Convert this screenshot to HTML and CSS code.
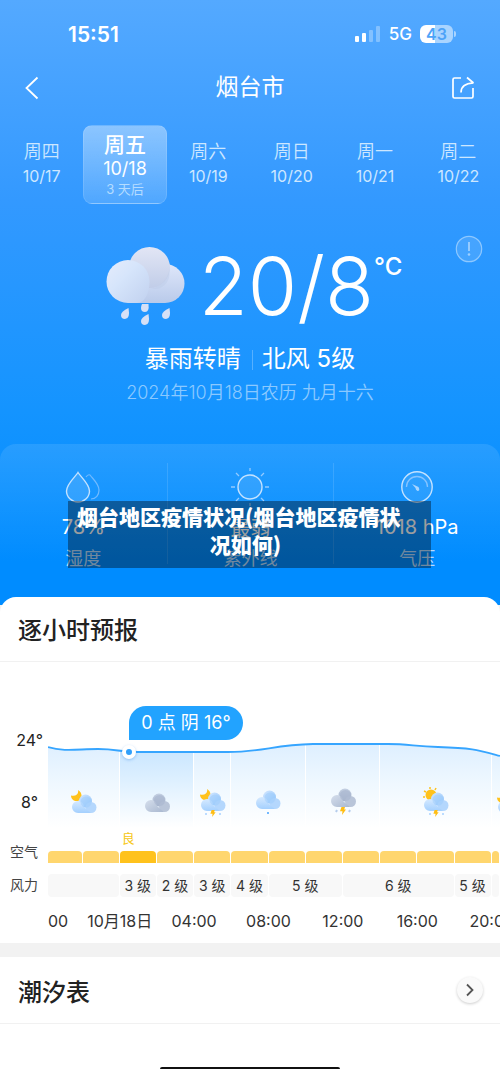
FILE: index.html
```html
<!DOCTYPE html>
<html lang="zh-CN">
<head>
<meta charset="utf-8">
<meta name="viewport" content="width=device-width, initial-scale=1">
<title>烟台市</title>
<link rel="stylesheet" href="styles.css">
</head>
<body>
<svg class="defs" aria-hidden="true">
  <defs>
    <linearGradient id="blueA" x1="0" y1="0" x2="0" y2="1"><stop offset="0" stop-color="#d5e9ff"/><stop offset="1" stop-color="#a4d0fe"/></linearGradient>
    <linearGradient id="blueB" x1="0" y1="0" x2="1" y2="1"><stop offset="0" stop-color="#d3e7ff"/><stop offset="1" stop-color="#8fc4fb"/></linearGradient>
    <linearGradient id="grayA" x1="0" y1="0" x2="1" y2="1"><stop offset="0" stop-color="#d5deec"/><stop offset="1" stop-color="#a9b8d0"/></linearGradient>
    <linearGradient id="grayB" x1="0" y1="0" x2="0" y2="1"><stop offset="0" stop-color="#c3cfe2"/><stop offset="1" stop-color="#a7b5cd"/></linearGradient>
    <symbol id="cloud-blue" viewBox="0 0 26 20">
      <circle cx="14.500" cy="7" r="6.500" fill="url(#blueB)"/>
      <circle cx="20" cy="13.500" r="5.500" fill="#b4d7fd"/>
      <path d="M7 19a6 6 0 1 1 6-6l7 6z" fill="url(#blueA)"/>
      <circle cx="15" cy="8" r="5.500" fill="#9ccbfc" opacity=".5"/>
    </symbol>
    <symbol id="cloud-gray" viewBox="0 0 26 20">
      <circle cx="15" cy="7" r="6.500" fill="url(#grayB)"/>
      <circle cx="20.500" cy="13.500" r="5.500" fill="#b9c5d9"/>
      <path d="M7 19a6 6 0 1 1 6-6l7 6z" fill="url(#grayA)"/>
      <circle cx="15.500" cy="7.500" r="5.500" fill="#a9b6cf" opacity=".6"/>
    </symbol>
    <symbol id="moon" viewBox="0 0 12 12"><path d="M7 0c1 4-2 6.500-7 5.500C0 9 3 11.500 6.500 11 11 10.500 12.500 3 7 0z" fill="#ffc21c"/></symbol>
    <symbol id="bolt" viewBox="0 0 6 8"><path d="M1.500 0H5L4.200 2.500H6L2 8l.5-3.700H0z" fill="#ffbd12"/></symbol>
  </defs>
</svg>

<main class="app">
  <section class="sky">
    <div class="status">
      <span class="clock">15:51</span>
      <div class="signals">
        <svg class="bars" viewBox="0 0 26 17" aria-hidden="true"><rect x="0" y="10" width="4" height="6" rx="1" fill="#fff"/><rect x="7" y="7" width="4" height="9" rx="1" fill="#fff"/><rect x="14" y="4" width="4" height="12" rx="1" fill="#fff" opacity=".3"/><rect x="21" y="0" width="4" height="16" rx="1" fill="#fff" opacity=".3"/></svg>
        <span class="network">5G</span>
        <span class="battery">43</span>
      </div>
    </div>

    <header class="nav">
      <button class="icon-button" aria-label="返回"><svg width="14" height="24" viewBox="0 0 14 24"><path d="M12.500 1.500L1.500 12l11 10.500" fill="none" stroke="#fff" stroke-width="1.800"/></svg></button>
      <h1 class="city">烟台市</h1>
      <button class="icon-button" aria-label="分享"><svg width="24" height="24" viewBox="0 0 24 24"><path d="M10 2H3.500Q2 2 2 3.500v17Q2 22 3.500 22h17q1.500 0 1.500-1.500V12M10 16.500Q10 7.500 22.500 7M16 1.500l6.500 5.500" fill="none" stroke="#fff" stroke-width="1.700" stroke-linejoin="round"/></svg></button>
    </header>

    <nav class="days" aria-label="日期">
      <button class="day">周四<span>10/17</span></button>
      <button class="day active">周五<span>10/18</span><small>3 天后</small></button>
      <button class="day">周六<span>10/19</span></button>
      <button class="day">周日<span>10/20</span></button>
      <button class="day">周一<span>10/21</span></button>
      <button class="day">周二<span>10/22</span></button>
    </nav>

    <section class="hero">
      <button class="info" aria-label="说明"><svg width="28" height="28" viewBox="0 0 28 28"><circle cx="14" cy="14" r="12.700" fill="#fff" fill-opacity=".12" stroke="#8ec8ff" stroke-width="1.200"/><path d="M14 7v9" stroke="#9fd0ff" stroke-width="1.800"/><circle cx="14" cy="19.500" r="1.300" fill="#9fd0ff"/></svg></button>
      <div class="now">
        <svg class="now-icon" width="80" height="80" viewBox="0 0 80 80" aria-hidden="true">
          <defs>
            <linearGradient id="h2" x1="0" y1="0" x2="1" y2="1"><stop offset="0" stop-color="#e6ecfb"/><stop offset=".4" stop-color="#d6e5fb"/><stop offset="1" stop-color="#c1d1ef"/></linearGradient>
            <linearGradient id="h3" x1="0" y1="0" x2="0" y2="1"><stop offset="0" stop-color="#dfe7fa"/><stop offset="1" stop-color="#b9caea"/></linearGradient>
            <linearGradient id="h4" x1="0" y1="0" x2="0" y2="1"><stop offset="0" stop-color="#e2e6f5"/><stop offset="1" stop-color="#c1cde8"/></linearGradient>
          </defs>
          <path d="M22 57V38l37-20a19.500 19.500 0 0 1 0 39z" fill="url(#h3)"/>
          <circle cx="43.500" cy="21.500" r="20.500" fill="url(#h4)"/>
          <path d="M43 43c10 0 20-10 20.500-22V28c0 8-7 15-14 15z" fill="#bccae7" opacity=".4"/>
          <path d="M22 57a21.500 21.500 0 1 1 21.500-21.500C43.500 48 38 57 31 57z" fill="url(#h2)"/>
          <g fill="#d6e0f6"><path id="drop" d="M22.500 62q2 11-3.500 11-4 0-4-4 0-3.500 7.500-7z"/><use href="#drop" x="41"/><use href="#drop" x="20" y="6"/><path d="M36 58h6.500q1 8-3.500 8-4 0-4-4 0-2 1-4z"/></g>
        </svg>
        <strong class="temp">20/8</strong><span class="unit">°C</span>
      </div>
      <p class="summary"><span>暴雨转晴</span><span>北风 5级</span></p>
      <p class="lunar">2024年10月18日农历 九月十六</p>
    </section>

    <section class="metrics">
      <div class="metric">
        <svg width="36" height="32" viewBox="0 0 36 32" fill="none" aria-hidden="true"><path d="M13 1.500C11 5 1.500 13 1.500 20a11.500 11 0 0 0 23 0C24.500 13 15 5 13 1.500z" fill="#fff" fill-opacity=".12" stroke="#c4e2ff" stroke-width="1.400"/><path d="M21 6q2-3 4-2c3 4 9 9 9 15 0 5-3 9-8 9" stroke="#71baff" stroke-width="1.200"/></svg>
        <b>78%</b><span>湿度</span>
      </div>
      <div class="metric">
        <svg width="40" height="40" viewBox="0 0 40 40" fill="none" aria-hidden="true"><circle cx="20" cy="20" r="12" fill="#fff" fill-opacity=".1" stroke="#c4e2ff" stroke-width="1.400"/><path d="M20 1v3M20 36v3M1 20h4M35 20h4M6 6l3 3M31 31l3 3M34 6l-3 3M9 31l-3 3" stroke="#93caff" stroke-width="1.300"/></svg>
        <b>最弱</b><span>紫外线</span>
      </div>
      <div class="metric">
        <svg width="32" height="32" viewBox="0 0 32 32" fill="none" aria-hidden="true"><circle cx="16" cy="16" r="15.200" fill="#fff" fill-opacity=".08" stroke="#c4e2ff" stroke-width="1.400"/><path d="M5.500 16a10.500 10.500 0 0 1 21 0" stroke="#85c3ff" stroke-width="1.300"/><path d="M11 13l6.500 3q2 4-1 4-2-1-2-3z" fill="#a9d5ff"/></svg>
        <b>1018 hPa</b><span>气压</span>
      </div>
      <p class="caption">烟台地区疫情状况(烟台地区疫情状况如何)</p>
    </section>
  </section>

  <section class="card hourly">
    <h2 class="card-title">逐小时预报</h2>
    <div class="chart">
      <div class="scale"><span>24°</span><span>8°</span></div>
      <div class="plot">
        <svg class="curve" viewBox="0 0 452 90" preserveAspectRatio="none" aria-hidden="true">
          <defs>
            <linearGradient id="band" x1="0" y1="0" x2="0" y2="1"><stop offset="0" stop-color="#dceeff"/><stop offset=".5" stop-color="#eff8ff"/><stop offset="1" stop-color="#fff"/></linearGradient>
            <linearGradient id="bandOn" x1="0" y1="0" x2="0" y2="1"><stop offset="0" stop-color="#c3e3ff"/><stop offset=".5" stop-color="#e0f1ff"/><stop offset="1" stop-color="#fff"/></linearGradient>
            <clipPath id="under"><path d="M0 7C16 12 30 9 50 9S70 12 90 12H180C215 12 225 5 265 4H340C360 4 365 6 390 7 425 8 430 10 452 16V90H0z"/></clipPath>
          </defs>
          <g clip-path="url(#under)" fill="url(#band)"><rect width="71" height="88"/><rect x="72" width="73" height="88" fill="url(#bandOn)"/><rect x="146" width="36" height="88"/><rect x="183" width="74" height="88"/><rect x="258" width="73" height="88"/><rect x="332" width="111" height="88"/><rect x="444" width="8" height="88"/></g>
          <path d="M0 7C16 12 30 9 50 9S70 12 90 12H180C215 12 225 5 265 4H340C360 4 365 6 390 7 425 8 430 10 452 16" fill="none" stroke="#36a5ff" stroke-width="1.800"/>
        </svg>
        <div class="hours icons">
          <svg class="w2" width="28" height="30" viewBox="0 0 28 30"><use href="#moon" x="1" y="3" width="12" height="12"/><use href="#cloud-blue" x="1" y="7" width="26" height="20"/></svg>
          <svg class="w2" width="28" height="30" viewBox="0 0 28 30"><use href="#cloud-gray" x="1" y="6" width="26" height="20"/></svg>
          <svg class="w1" width="28" height="30" viewBox="0 0 28 30"><use href="#moon" x="1" y="2" width="12" height="12"/><use href="#cloud-blue" x="1" y="5" width="26" height="20"/><use href="#bolt" x="11" y="23" width="6" height="7"/><path d="M7 26v2M21 26v2" stroke="#bcdcff" stroke-width="2"/></svg>
          <svg class="w2" width="28" height="30" viewBox="0 0 28 30"><use href="#cloud-blue" x="1" y="3" width="26" height="20"/><path d="M14 25v2" stroke="#73b9ff" stroke-width="2"/></svg>
          <svg class="w2" width="28" height="30" viewBox="0 0 28 30"><use href="#cloud-gray" x="1" y="1" width="26" height="20"/><use href="#bolt" x="11" y="20" width="6" height="8"/><path d="M8 23l-1 2M21 23l-1 2" stroke="#b5cdec" stroke-width="2"/></svg>
          <svg class="w3" width="28" height="30" viewBox="0 0 28 30"><circle cx="9" cy="8" r="5.500" fill="#ffc21c"/><path d="M1 10h2M2 4l2 1M8 0v2M14 1l-1 2" stroke="#ffc21c" stroke-width="1.500"/><use href="#cloud-blue" x="1" y="5" width="26" height="20"/><use href="#bolt" x="11" y="23" width="6" height="7"/><path d="M8 26v2M21 26v2" stroke="#bcdcff" stroke-width="2"/></svg>
          <svg class="w1 cut" width="28" height="30" viewBox="0 0 28 30"><use href="#moon" x="0" y="5" width="12" height="12"/><use href="#cloud-blue" x="0" y="7" width="26" height="20"/></svg>
        </div>
        <span class="marker"></span>
        <span class="bubble">0 点 阴 16°</span>
      </div>

      <span class="row-label air-label">空气</span>
      <div class="air-row">
        <div class="hours quality"><span>良</span></div>
        <div class="hours air"><i></i><i></i><i class="on"></i><i></i><i></i><i></i><i></i><i></i><i></i><i></i><i></i><i></i><i></i></div>
      </div>

      <span class="row-label">风力</span>
      <div class="hours wind"><span class="w2"></span><span>3 级</span><span>2 级</span><span>3 级</span><span>4 级</span><span class="w2">5 级</span><span class="w3">6 级</span><span>5 级</span><span></span></div>

      <div class="hours times"><span class="first">00</span><span class="w2">10月18日</span><span class="w2">04:00</span><span class="w2">08:00</span><span class="w2">12:00</span><span class="w2">16:00</span><span class="last">20:00</span></div>
    </div>
  </section>

  <section class="card tide">
    <div class="tide-head">
      <h2>潮汐表</h2>
      <button class="more" aria-label="查看潮汐表"><svg width="10" height="14" viewBox="0 0 10 14"><path d="M2 1.500L7.500 7 2 12.500" fill="none" stroke="#555" stroke-width="1.800"/></svg></button>
    </div>
    <div class="tide-body"><span class="home-bar"></span></div>
  </section>
</main>
</body>
</html>
```
FILE: styles.css
```css
* { box-sizing: border-box; }
body, h1, h2, p { margin: 0; }
body {
  background: #fff;
  color: #222;
  font-family: Inter, "Noto Sans CJK SC", sans-serif;
  overflow-x: hidden;
}
button {
  padding: 0;
  border: 0;
  background: none;
  color: inherit;
  font: inherit;
  cursor: pointer;
}
svg { display: block; }
.defs { position: absolute; width: 0; height: 0; }
.app { background: #f2f2f2; }

/* Sky */
.sky {
  padding-bottom: 16px;
  background: linear-gradient(#54a9ff, #3399ff 33%, #1494ff 68%, #008cff 93%);
  color: #fff;
}
.status {
  display: flex;
  align-items: center;
  justify-content: space-between;
  height: 68px;
  padding: 0 47px 0 68px;
}
.clock { font-size: 21px; font-weight: 600; }
.signals { display: flex; align-items: center; gap: 8px; }
.bars { width: 26px; height: 17px; }
.network { font-size: 17px; font-weight: 500; }
.battery {
  position: relative;
  width: 33px;
  border-radius: 6px;
  background: linear-gradient(90deg, #fff 44%, #a9d4ff 44%);
  color: #4da3f8;
  font-size: 16px;
  font-weight: 600;
  line-height: 18px;
  text-align: center;
}
.battery::after {
  content: "";
  position: absolute;
  top: 6px;
  right: -3px;
  width: 2px;
  height: 6px;
  border-radius: 0 2px 2px 0;
  background: #a9d4ff;
}
.nav {
  display: flex;
  align-items: center;
  justify-content: space-between;
  height: 40px;
  padding: 0 25px;
}
.icon-button { display: flex; width: 24px; }
.city { font-size: 23px; font-weight: 400; line-height: 32px; padding-bottom: 3px; }
.days {
  display: grid;
  grid-template-columns: repeat(6, 1fr);
  margin-top: 17px;
  height: 79px;
}
.day {
  display: flex;
  flex-direction: column;
  align-items: center;
  padding-top: 15px;
  color: #cde7ff;
  font-size: 18px;
  font-weight: 350;
  line-height: 24px;
}
.day span { font-size: 16px; font-weight: 400; }
.day.active {
  padding-top: 7px;
  border: 1px solid rgba(255, 255, 255, .12);
  border-radius: 9px;
  background: linear-gradient(rgba(255, 255, 255, .4), rgba(255, 255, 255, .14));
  color: #fff;
  font-size: 21px;
  font-weight: 500;
}
.day.active span { font-size: 18px; }
.day.active small { color: #b5dcff; font-size: 13px; font-weight: 400; line-height: 16px; }

.hero { position: relative; padding-top: 36px; text-align: center; }
.info { position: absolute; top: 31px; right: 17px; }
.now {
  display: flex;
  align-items: flex-start;
  justify-content: center;
  height: 96px;
  padding-left: 8px;
}
.now-icon { margin: 6px 13px 0 0; }
.temp { font-size: 80px; font-weight: 300; line-height: 92px; }
.unit { font-size: 24px; font-weight: 500; line-height: 54px; }
.summary {
  display: flex;
  justify-content: center;
  margin-top: 7px;
  font-size: 24px;
  line-height: 32px;
}
.summary span + span {
  margin-left: 11px;
  padding-left: 10px;
  background: linear-gradient(#56b0ff, #56b0ff) 0 60% / 1px 20px no-repeat;
}
.lunar { margin-top: 4px; color: #8bc9ff; font-size: 18px; font-weight: 350; line-height: 28px; }

.metrics {
  position: relative;
  display: grid;
  grid-template-columns: repeat(3, 1fr);
  margin-top: 37px;
  padding: 19px 0 25px;
  border-radius: 16px;
  background: linear-gradient(rgba(255, 255, 255, .1), rgba(255, 255, 255, 0) 80%);
}
.metric {
  display: grid;
  grid-template-rows: 48px 32px 28px;
  place-items: center;
  height: 101px;
}
.metric + .metric { border-left: 1px solid rgba(255, 255, 255, .12); }
.metric b { font-size: 20px; font-weight: 400; }
.metric span { color: #b5dcff; font-size: 18px; }
.caption {
  position: absolute;
  top: 57px;
  right: 69px;
  left: 68px;
  padding: 1px 17px 10px 9px;
  background: rgba(0, 0, 0, .38);
  font-family: "Noto Sans CJK SC", sans-serif;
  font-size: 21px;
  font-weight: 900;
  line-height: 28px;
  text-align: left;
  text-align-last: center;
}

/* Hourly */
.card { background: #fff; }
.hourly { margin-top: -8px; border-radius: 16px 16px 0 0; }
.card-title {
  padding: 3px 18px 0;
  border-bottom: 1px solid #f1f1f1;
  line-height: 61px;
}
.card-title, .tide h2 { font-size: 24px; font-weight: 500; }
.chart {
  display: grid;
  grid-template-columns: 48px minmax(0, 1fr);
  padding: 78px 0 10px;
}
.scale {
  display: flex;
  flex-direction: column;
  gap: 42px;
  margin-top: -10px;
  padding-right: 5px;
  font-size: 16px;
  line-height: 20px;
  text-align: right;
}
.scale span + span { padding-right: 5px; }
.plot { position: relative; display: grid; }
.curve, .icons { grid-area: 1 / 1; }
.curve { width: 100%; height: 90px; }
.hours {
  display: grid;
  grid-template-columns: minmax(0, 345fr) repeat(11, minmax(0, 372fr)) minmax(0, 83fr);
  min-width: 0;
}
.w2 { grid-column: span 2; }
.w3 { grid-column: span 3; }
.icons { justify-items: center; padding-top: 47px; overflow: hidden; }
.icons .w2:first-child { justify-self: center; }
.icons .cut { justify-self: start; margin-left: 5px; }
.marker {
  position: absolute;
  top: 5px;
  left: 18%;
  width: 14px;
  height: 14px;
  margin-left: -7px;
  border: 4px solid #fff;
  border-radius: 50%;
  background: #2f9ffb;
  box-shadow: 0 1px 3px rgba(30, 120, 220, .35);
}
.bubble {
  position: absolute;
  top: -34px;
  left: 18%;
  padding: 0 12px;
  border-radius: 17px 17px 17px 0;
  background: #22a3ff;
  color: #fff;
  font-size: 18px;
  line-height: 34px;
  white-space: nowrap;
}
.row-label { color: #444; font-size: 14px; line-height: 22px; text-align: center; }
.air-label { align-self: end; padding-bottom: 11px; }
.quality { color: #f6c716; font-size: 13px; line-height: 16px; }
.quality span { grid-column: 3; padding-left: 2px; }
.air { margin-top: 5px; }
.air i { height: 12px; margin-right: 1px; border-radius: 4px 4px 0 0; background: #ffd66e; }
.air .on { background: #ffc21c; }
.air-row { padding-bottom: 11px; }
.wind { font-size: 14px; line-height: 23px; text-align: center; }
.wind span { height: 23px; margin-right: 1px; border-radius: 4px; background: #f8f8f8; color: #333; }
.times {
  grid-column: 2;
  margin-top: 12px;
  overflow: hidden;
  color: #333;
  font-size: 16px;
  line-height: 24px;
  text-align: center;
  white-space: nowrap;
}
.times .first { text-align: left; }
.times .last { padding-left: 15px; text-align: left; }

/* Tide */
.tide { margin-top: 14px; }
.tide-head {
  display: flex;
  align-items: center;
  justify-content: space-between;
  height: 67px;
  padding: 0 17px 0 18px;
  border-bottom: 1px solid #f1f1f1;
}
.more {
  display: grid;
  place-items: center;
  width: 26px;
  height: 26px;
  border-radius: 50%;
  background: #fafafa;
  box-shadow: 0 1px 3px rgba(0, 0, 0, .2);
}
.tide-body { display: flex; align-items: flex-end; justify-content: center; height: 45px; }
.home-bar { width: 36%; height: 2px; border-radius: 2px 2px 0 0; background: #111; }
```
